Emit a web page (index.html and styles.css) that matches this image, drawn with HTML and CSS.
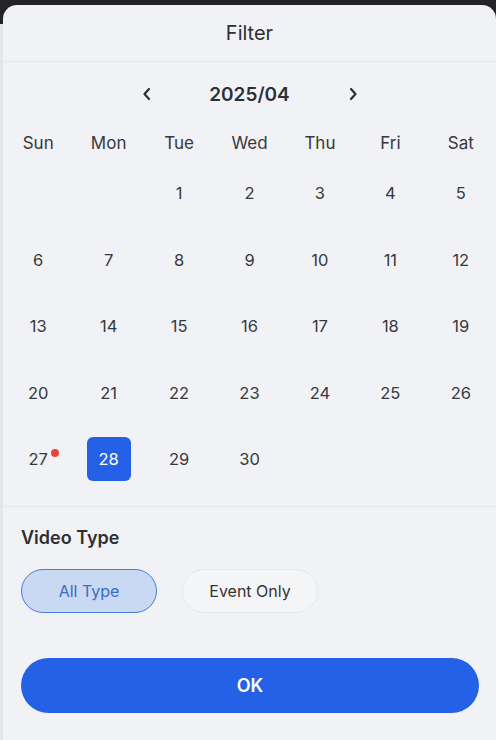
FILE: index.html
```html
<!DOCTYPE html>
<html lang="en">
<head>
  <meta charset="UTF-8">
  <title>Filter</title>
  <link rel="stylesheet" href="styles.css">
</head>
<body>
  <!-- Filter Sheet -->
  <div class="sheet">
    <div class="sheet-header">Filter</div>

    <div class="calendar">
      <div class="month-nav">
        <span class="chevron">
          <svg width="10" height="14" viewBox="0 0 10 14"><path d="M7 2 L2.5 7 L7 12" fill="none" stroke="#2f2f33" stroke-width="2.2" stroke-linecap="round" stroke-linejoin="round"/></svg>
        </span>
        <span class="month-label">2025/04</span>
        <span class="chevron">
          <svg width="10" height="14" viewBox="0 0 10 14"><path d="M3 2 L7.5 7 L3 12" fill="none" stroke="#2f2f33" stroke-width="2.2" stroke-linecap="round" stroke-linejoin="round"/></svg>
        </span>
      </div>

      <div class="weekdays">
        <span>Sun</span><span>Mon</span><span>Tue</span><span>Wed</span><span>Thu</span><span>Fri</span><span>Sat</span>
      </div>

      <div class="days">
        <span></span><span></span>
        <span class="day">1</span><span class="day">2</span><span class="day">3</span><span class="day">4</span><span class="day">5</span>
        <span class="day">6</span><span class="day">7</span><span class="day">8</span><span class="day">9</span><span class="day">10</span><span class="day">11</span><span class="day">12</span>
        <span class="day">13</span><span class="day">14</span><span class="day">15</span><span class="day">16</span><span class="day">17</span><span class="day">18</span><span class="day">19</span>
        <span class="day">20</span><span class="day">21</span><span class="day">22</span><span class="day">23</span><span class="day">24</span><span class="day">25</span><span class="day">26</span>
        <span class="day"><span class="num has-event">27</span></span>
        <span class="day"><span class="num selected">28</span></span>
        <span class="day">29</span><span class="day">30</span>
      </div>
    </div>

    <div class="video-type">
      <h3>Video Type</h3>
      <div class="chips">
        <button class="chip active">All Type</button>
        <button class="chip">Event Only</button>
      </div>
    </div>

    <button class="ok-btn">OK</button>
  </div>
</body>
</html>
```

FILE: styles.css
```css
body {
  margin: 0;
  background: linear-gradient(#242427 0, #242427 24px, #e4e5e8 24px);
  font-family: Inter, "Noto Sans", Arial, sans-serif;
  color: #2f2f33;
}

.sheet {
  margin: 5px 0 0 3px;
  height: 735px;
  background: #f1f2f5;
  border-radius: 14px 14px 0 0;
}

.sheet-header {
  height: 56px;
  display: flex;
  justify-content: center;
  align-items: center;
  font-size: 20px;
  border-bottom: 1px solid #e6e7eb;
}

.calendar {
  border-bottom: 1px solid #e6e7eb;
  padding-bottom: 13px;
}

.month-nav {
  height: 64px;
  display: flex;
  justify-content: center;
  align-items: center;
}

.chevron {
  width: 24px;
  display: flex;
  justify-content: center;
}

.month-label {
  width: 182px;
  text-align: center;
  font-size: 19px;
  font-weight: 600;
}

.weekdays,
.days {
  display: grid;
  grid-template-columns: repeat(7, 1fr);
}

.weekdays span {
  height: 34px;
  display: flex;
  justify-content: center;
  align-items: center;
  font-size: 17px;
  color: #38383c;
}

.day {
  height: 66.5px;
  display: flex;
  justify-content: center;
  align-items: center;
  font-size: 16.5px;
  color: #38383c;
}

.num {
  position: relative;
}

.has-event::after {
  content: "";
  position: absolute;
  top: 0;
  right: -11px;
  width: 8px;
  height: 8px;
  border-radius: 50%;
  background: #e4463c;
}

.selected {
  width: 44px;
  height: 44px;
  border-radius: 6px;
  background: #2461e6;
  color: white;
  display: flex;
  justify-content: center;
  align-items: center;
}

.video-type {
  padding: 20px 18px 0;
}

h3 {
  margin: 0 0 21px;
  font-size: 18px;
  font-weight: 600;
}

.chips {
  display: flex;
  gap: 25px;
}

.chip {
  width: 136px;
  height: 44px;
  border-radius: 22px;
  border: 1px solid #e7e8eb;
  background: #f4f5f7;
  font-family: inherit;
  font-size: 16px;
  color: #333;
}

.chip.active {
  background: #c9d8f3;
  border-color: #4a7fd9;
  color: #3a6bc9;
}

.ok-btn {
  display: block;
  margin: 45px 0 0 18px;
  width: 458px;
  height: 55px;
  border: none;
  border-radius: 28px;
  background: #2461e6;
  color: white;
  font-family: inherit;
  font-size: 18px;
  font-weight: 600;
}
```
